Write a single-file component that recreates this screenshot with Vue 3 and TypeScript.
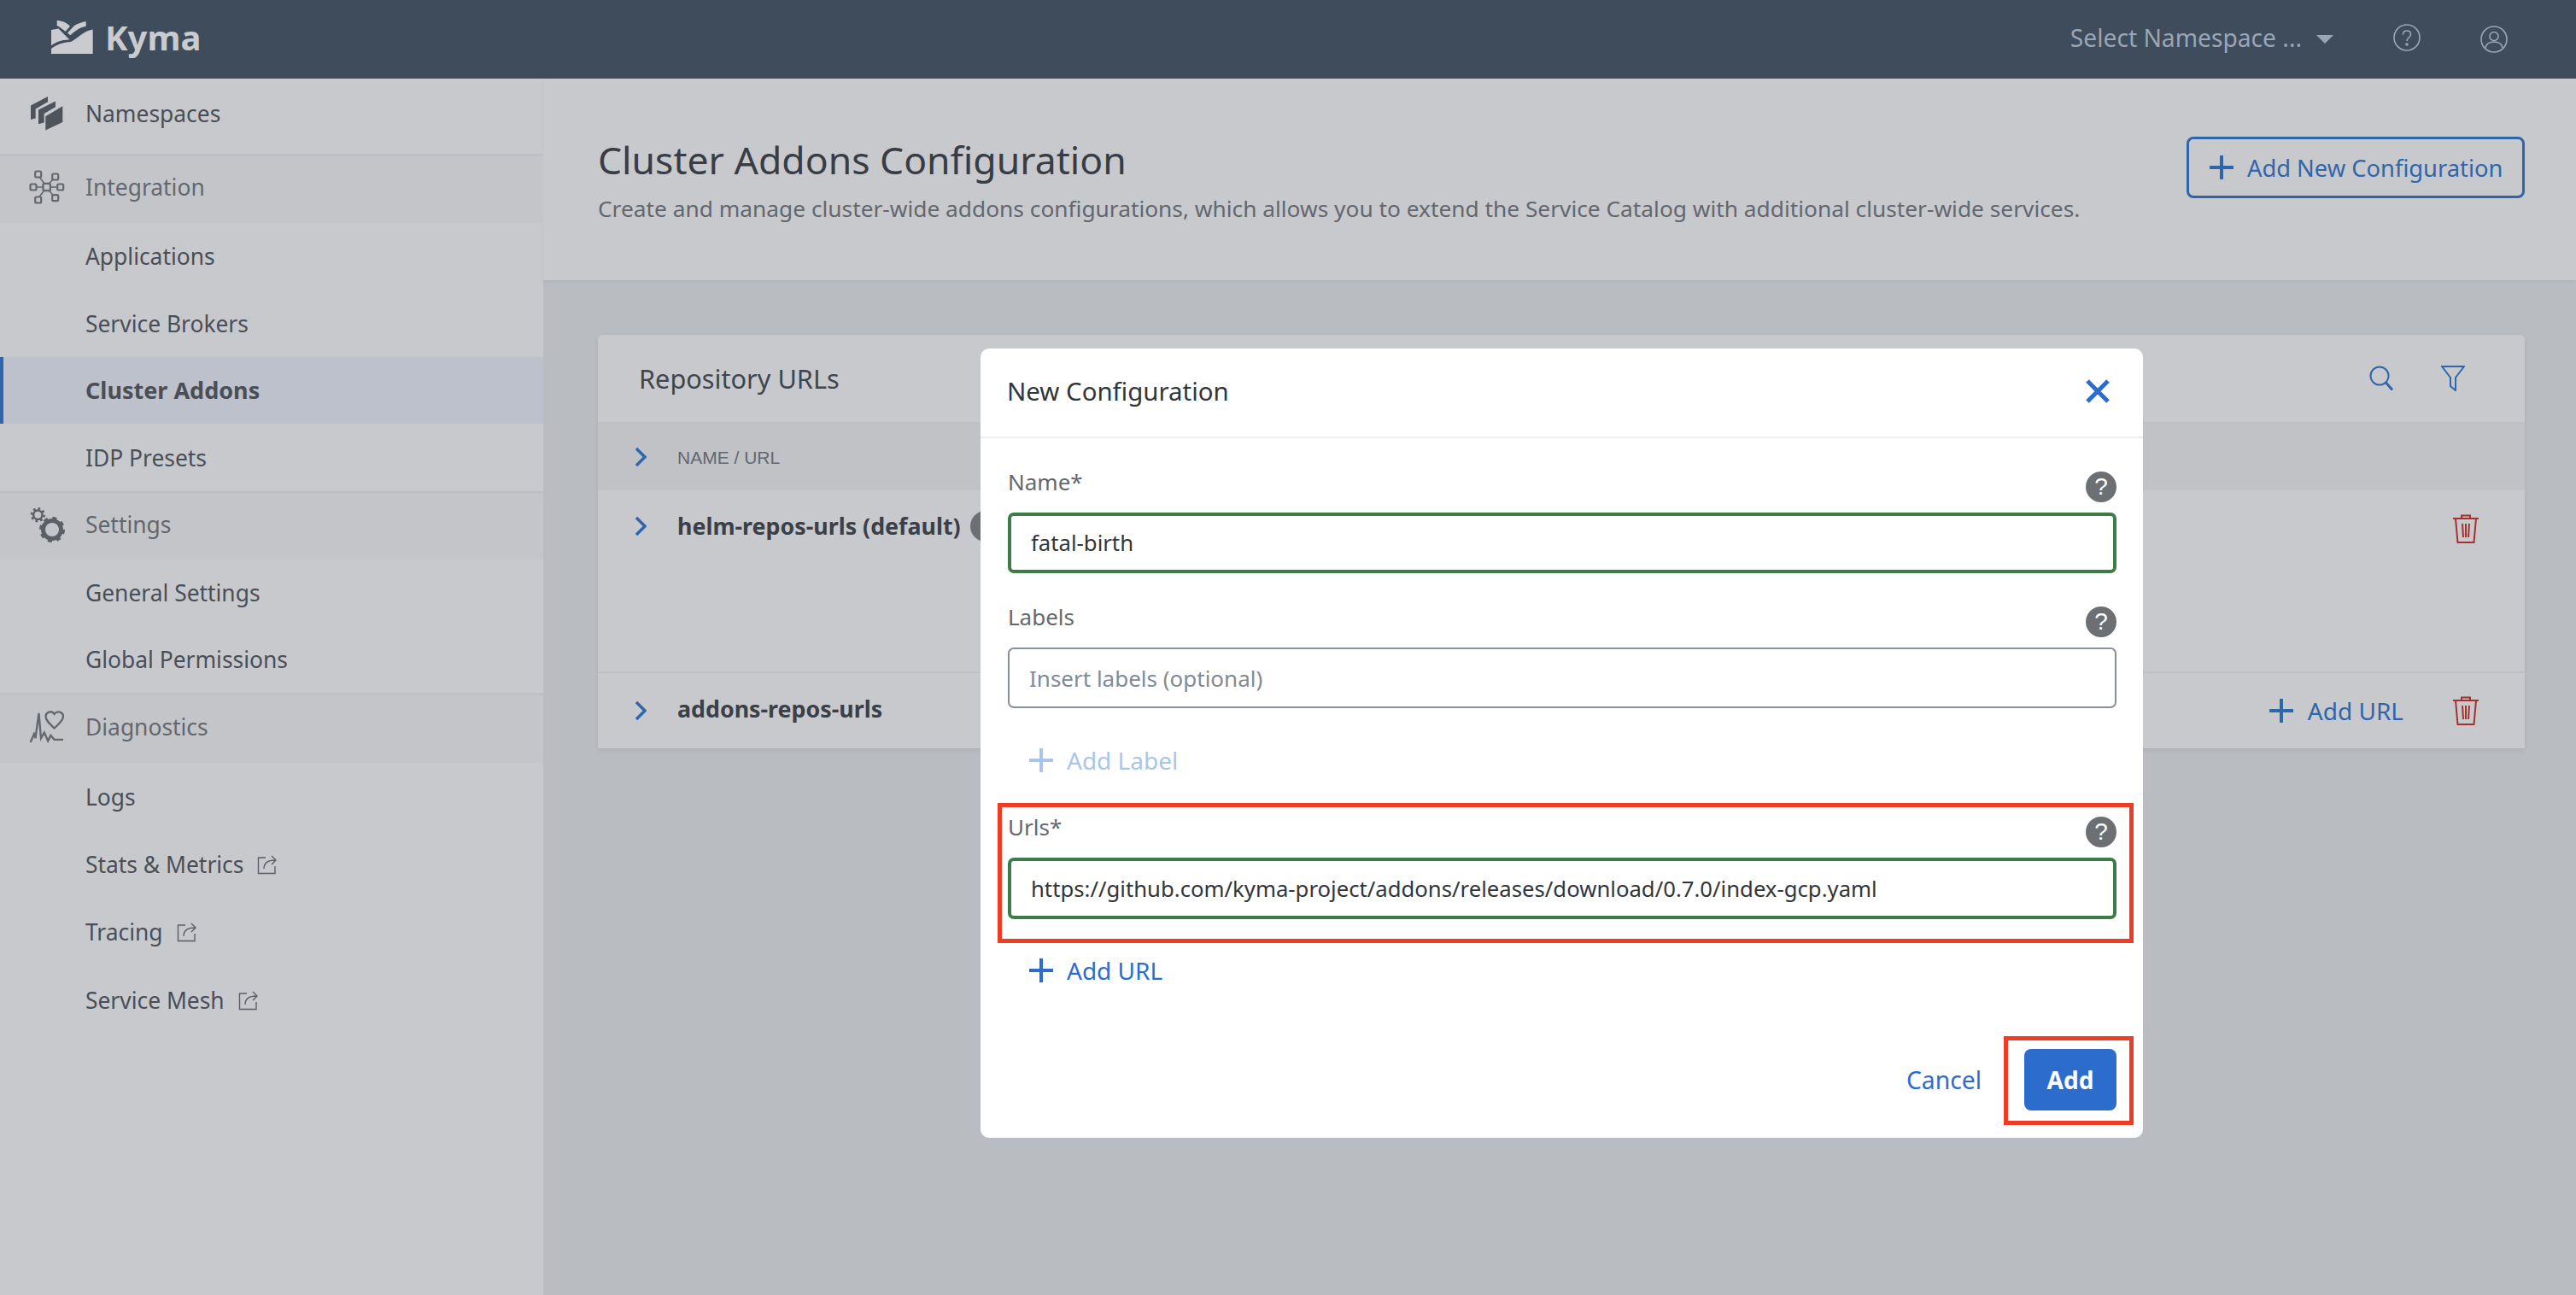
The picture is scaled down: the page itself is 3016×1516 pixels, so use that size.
<script setup lang="ts">
type NavItem = {
  label: string;
  kind: 'top' | 'group' | 'sub';
  icon?: string;
  active?: boolean;
  external?: boolean;
  height: number;
};

const nav: NavItem[] = [
  { label: 'Namespaces', kind: 'top', icon: 'namespaces', height: 88 },
  { label: 'Integration', kind: 'group', icon: 'integration', height: 81 },
  { label: 'Applications', kind: 'sub', height: 78 },
  { label: 'Service Brokers', kind: 'sub', height: 79 },
  { label: 'Cluster Addons', kind: 'sub', active: true, height: 78 },
  { label: 'IDP Presets', kind: 'sub', height: 79 },
  { label: 'Settings', kind: 'group', icon: 'settings', height: 80 },
  { label: 'General Settings', kind: 'sub', height: 78 },
  { label: 'Global Permissions', kind: 'sub', height: 78 },
  { label: 'Diagnostics', kind: 'group', icon: 'diagnostics', height: 82 },
  { label: 'Logs', kind: 'sub', height: 79 },
  { label: 'Stats & Metrics', kind: 'sub', external: true, height: 79 },
  { label: 'Tracing', kind: 'sub', external: true, height: 80 },
  { label: 'Service Mesh', kind: 'sub', external: true, height: 79 },
];

const nodes = [
  [9.7, 5],
  [29.7, 8],
  [4, 20],
  [35.7, 20],
  [9.7, 35],
  [29.7, 32.7],
];

const fields = [
  { label: 'Name*', value: 'fatal-birth', valid: true },
  { label: 'Labels', placeholder: 'Insert labels (optional)', valid: false },
];
const urlValue = 'https://github.com/kyma-project/addons/releases/download/0.7.0/index-gcp.yaml';
</script>

<template>
  <div class="app">
    <header class="topbar">
      <div class="brand">
        <svg class="logo" viewBox="0 0 49 39" fill="#c9cbce">
          <path d="M6.700 0C11 0 18 2 22 6.700L16.700 12.700C13 10 9 7 6.700 6z" />
          <path d="M40.700 1V6.700C33 8 27 13 22.300 17.300L19 14.500L27 6C31 3.500 36 2 40.700 1z" />
          <path d="M0 11L8.500 9.500C12 13 18 19 21.500 22.500C14 22 5 25 0 29.500z" />
          <path d="M0 39V33C6 28 14 25.500 23 25C31 21 38 12 48.700 10.500V39z" />
        </svg>
        <span class="brand-name">Kyma</span>
      </div>
      <div class="top-actions">
        <span class="ns-select">Select Namespace ...</span>
        <span class="caret"></span>
        <svg class="top-icon help" viewBox="0 0 32 32" fill="none" stroke="#9aa6b4" stroke-width="1.600">
          <circle cx="16" cy="16" r="15" />
          <path d="M11.500 12.500c0-3 2-4.500 4.500-4.500s4.500 1.600 4.500 4.200c0 3.800-4.500 3.800-4.500 7.800" />
          <circle cx="16" cy="24" r="1" fill="#9aa6b4" />
        </svg>
        <svg class="top-icon" viewBox="0 0 32 32" fill="none" stroke="#9aa6b4" stroke-width="1.600">
          <circle cx="16" cy="16" r="15" />
          <circle cx="16" cy="12.500" r="5" />
          <path d="M6 26c1-5 5-7 10-7s9 2 10 7" />
        </svg>
      </div>
    </header>

    <div class="body">
      <nav class="sidebar">
        <div
          v-for="item in nav"
          :key="item.label"
          class="nav-row"
          :class="[item.kind, { active: item.active }]"
          :style="{ height: item.height + 'px' }"
        >
          <span v-if="item.icon" class="nav-icon">
            <svg v-if="item.icon === 'namespaces'" viewBox="-1 0 40 40" fill="#4f535b">
              <path d="M0 10.600L20 0V6.300L5.700 14.500V25.500L0 27z" />
              <path d="M9 15.600L29 5.600V12.300L15.700 20V30.600L9 32.300z" />
              <path d="M17.300 23.300L37.300 11.300V30L17.300 39.600z" />
            </svg>
            <svg v-else-if="item.icon === 'integration'" viewBox="0 0 40 40" fill="none" stroke="#63676e" stroke-width="2.200">
              <rect v-for="(n, i) in nodes" :key="i" :x="n[0] - 3.500" :y="n[1] - 3.500" width="7" height="7" rx="1.500" />
              <rect x="15.500" y="15.800" width="8.400" height="8.400" rx="1.500" />
              <path d="M11 8l6 8M27.500 10.500l-5 5.300M7.500 20h8M24 20h8M16.500 24.200L11 31.500M22.500 24.200L27.500 30" stroke-width="1.600" />
            </svg>
            <svg v-else-if="item.icon === 'settings'" viewBox="0 0 40 40" fill="none" stroke="#5b5f66">
              <circle cx="9.300" cy="8.700" r="5.200" stroke-width="2.500" />
              <circle cx="9.300" cy="8.700" r="7.400" stroke-width="2.400" stroke-dasharray="2.800 3" />
              <circle cx="26" cy="26" r="10.500" stroke-width="5" />
              <circle cx="26" cy="26" r="13.500" stroke-width="3" stroke-dasharray="5 5.600" />
            </svg>
            <svg v-else viewBox="0 -1 41 41" fill="none" stroke="#63676e" stroke-width="2.400">
              <path d="M0.700 38L5 28L6.700 33L10.700 3L13.300 33L17.300 26.300L21.700 36.300L25 29.700L29.300 34.700H40" />
              <path d="M29.300 21C24 16 19 12 19 7C19 2 26 -1 29.300 4C33 -1 40 2 40 7C40 12 34.500 16 29.300 21z" />
            </svg>
          </span>
          <span class="nav-label">{{ item.label }}</span>
          <svg v-if="item.external" class="ext" viewBox="0 0 24 24" fill="none" stroke="#5a5e66" stroke-width="1.400">
            <path d="M10 4H1.500v18.500H21V14" />
            <path d="M8 17c0-6 4-10 13-10M17 2l5 5-5 5" />
          </svg>
        </div>
      </nav>

      <main class="page">
        <section class="page-head">
          <div>
            <h1>Cluster Addons Configuration</h1>
            <p>Create and manage cluster-wide addons configurations, which allows you to extend the Service Catalog with additional cluster-wide services.</p>
          </div>
          <button class="outline-btn">
            <svg viewBox="0 0 28 28" class="plus"><path d="M14 0v28M0 14h28" /></svg>
            Add New Configuration
          </button>
        </section>

        <section class="content">
          <div class="panel">
            <div class="panel-head">
              <h2>Repository URLs</h2>
              <div class="panel-tools">
                <svg viewBox="0 0 28 30" fill="none" stroke="#2f65ab" stroke-width="2">
                  <circle cx="12" cy="12" r="10.500" />
                  <path d="M19.500 20l7.500 8.500" stroke-width="3" />
                </svg>
                <svg viewBox="0 0 28 30" fill="none" stroke="#2f65ab" stroke-width="2">
                  <path d="M1 1h26L17 14v15l-6-5V14z" />
                </svg>
              </div>
            </div>
            <div class="row col-head">
              <svg class="chev" viewBox="0 0 14 24"><path d="M2 2l10 10L2 22" /></svg>
              <span>NAME / URL</span>
            </div>
            <div class="row first">
              <svg class="chev" viewBox="0 0 14 24"><path d="M2 2l10 10L2 22" /></svg>
              <strong>helm-repos-urls (default)</strong>
              <span class="hint-dot"></span>
              <svg class="trash" viewBox="0 0 30 34" fill="none" stroke="#a33130" stroke-width="2">
                <path d="M0 5h30M10 5V1.500h10V5M3 5l2.500 28h19L27 5M11 11l1 16M15 11v16M19 11l-1 16" />
              </svg>
            </div>
            <div class="row second">
              <svg class="chev" viewBox="0 0 14 24"><path d="M2 2l10 10L2 22" /></svg>
              <strong>addons-repos-urls</strong>
              <span class="row-add">
                <svg viewBox="0 0 28 28" class="plus"><path d="M14 0v28M0 14h28" /></svg>
                Add URL
              </span>
              <svg class="trash" viewBox="0 0 30 34" fill="none" stroke="#a33130" stroke-width="2">
                <path d="M0 5h30M10 5V1.500h10V5M3 5l2.500 28h19L27 5M11 11l1 16M15 11v16M19 11l-1 16" />
              </svg>
            </div>
          </div>
        </section>
      </main>
    </div>

    <div class="modal">
      <div class="modal-head">
        <span>New Configuration</span>
        <svg class="close" viewBox="0 0 28 28"><path d="M2 2l24 24M26 2L2 26" /></svg>
      </div>
      <div class="modal-body">
        <div v-for="f in fields" :key="f.label" class="field">
          <div class="field-label">
            <label>{{ f.label }}</label>
            <span class="help-badge">?</span>
          </div>
          <div class="input" :class="{ valid: f.valid, placeholder: !f.value }">{{ f.value || f.placeholder }}</div>
        </div>
        <div class="link-btn disabled">
          <svg viewBox="0 0 28 28" class="plus"><path d="M14 0v28M0 14h28" /></svg>
          Add Label
        </div>
        <div class="field urls">
          <div class="field-label">
            <label>Urls*</label>
            <span class="help-badge">?</span>
          </div>
          <div class="input valid">{{ urlValue }}</div>
          <div class="callout"></div>
        </div>
        <div class="link-btn">
          <svg viewBox="0 0 28 28" class="plus"><path d="M14 0v28M0 14h28" /></svg>
          Add URL
        </div>
      </div>
      <div class="modal-foot">
        <span class="cancel">Cancel</span>
        <button class="primary">
          Add
          <span class="callout"></span>
        </button>
      </div>
    </div>
  </div>
</template>

<style>
html,
body {
  margin: 0;
  background: #b9bcc1;
}
</style>

<style scoped>
.app {
  position: relative;
  width: 3016px;
  height: 1516px;
  overflow: hidden;
  display: flex;
  flex-direction: column;
  font-family: "Noto Sans", "Open Sans", sans-serif;
  color: #4a4e57;
  background: #b9bcc1;
}

.topbar {
  height: 92px;
  flex: none;
  display: flex;
  align-items: center;
  justify-content: space-between;
  background: #3f4c5c;
}

.brand {
  display: flex;
  align-items: center;
  padding-left: 60px;
  gap: 14px;
}

.logo {
  width: 49px;
  height: 39px;
  margin-top: -6px;
}

.brand-name {
  font-size: 40px;
  font-weight: 700;
  line-height: 50px;
  margin-bottom: 4px;
  color: #c9cbce;
}

.top-actions {
  display: flex;
  align-items: center;
  padding-right: 80px;
}

.ns-select {
  font-size: 28.2px;
  line-height: 40px;
  margin-bottom: 5px;
  color: #9aa6b4;
}

.caret {
  width: 0;
  height: 0;
  margin-left: 17px;
  border-left: 10px solid transparent;
  border-right: 10px solid transparent;
  border-top: 10px solid #9aa6b4;
}

.top-icon {
  width: 32px;
  height: 32px;
  margin-left: 70px;
}

.top-icon.help {
  margin-top: -4px;
}

.body {
  flex: 1;
  display: flex;
  min-height: 0;
}

.sidebar {
  width: 636px;
  flex: none;
  background: #c8c9cd;
  font-size: 26.4px;
}

.nav-row {
  display: flex;
  align-items: center;
  box-sizing: border-box;
  padding-left: 100px;
  position: relative;
}

.nav-row.top,
.nav-row.group {
  padding-bottom: 6px;
}

.nav-row.group {
  background: #c4c5c9;
  color: #63676e;
  border-top: 3px solid #bfc0c5;
}

.nav-row.active {
  background: #bcc1cb;
  font-weight: 700;
  font-size: 27px;
  padding-bottom: 2px;
  box-shadow: inset 4px 0 0 #2f66ab;
}

.nav-icon {
  position: absolute;
  left: 35px;
  top: calc(50% - 3px);
  width: 40px;
  height: 40px;
  transform: translateY(-50%);
}

.nav-icon svg {
  display: block;
  width: 100%;
  height: 100%;
  overflow: visible;
}

.ext {
  width: 24px;
  height: 24px;
  margin-left: 16px;
}

.page {
  flex: 1;
  display: flex;
  flex-direction: column;
  min-width: 0;
}

.page-head {
  height: 236px;
  box-sizing: border-box;
  flex: none;
  display: flex;
  justify-content: space-between;
  align-items: flex-start;
  padding: 60px 60px 0 64px;
  background: #c8c9cd;
  box-shadow: 0 2px 4px rgba(0, 0, 0, 0.05);
}

h1 {
  margin: 0;
  font-size: 44.5px;
  line-height: 70px;
  font-weight: 400;
  color: #383c44;
}

.page-head p {
  margin: 2px 0 0;
  font-size: 26.3px;
  line-height: 40px;
  color: #63676e;
}

.outline-btn {
  width: 396px;
  height: 72px;
  margin-top: 8px;
  display: flex;
  align-items: center;
  gap: 16px;
  padding: 0 0 0 24px;
  border: 3px solid #2f66ab;
  border-radius: 8px;
  background: none;
  color: #2f66ab;
  font: inherit;
  font-size: 27.3px;
}

.plus {
  width: 28px;
  height: 28px;
  flex: none;
  fill: none;
  stroke: currentColor;
  stroke-width: 4;
}

.content {
  flex: 1;
  padding: 64px 60px 0 64px;
}

.panel {
  background: #c8c9cd;
  border-radius: 6px 6px 0 0;
  box-shadow: 0 2px 6px rgba(0, 0, 0, 0.08);
}

.panel-head {
  height: 104px;
  display: flex;
  align-items: center;
  justify-content: space-between;
  padding: 0 70px 0 48px;
  border-bottom: 2px solid #bfc0c5;
  box-sizing: border-box;
}

h2 {
  margin: 0;
  font-size: 30.7px;
  font-weight: 400;
  color: #41454d;
}

.panel-tools {
  display: flex;
  gap: 56px;
}

.panel-tools svg {
  width: 28px;
  height: 30px;
}

.row {
  display: flex;
  align-items: center;
  padding-left: 43px;
  padding-right: 54px;
  box-sizing: border-box;
}

.chev {
  width: 14px;
  height: 24px;
  margin-right: 36px;
  flex: none;
  fill: none;
  stroke: #2f66ab;
  stroke-width: 3.5;
}

.col-head {
  height: 78px;
  background: #c0c2c6;
  font-family: "Liberation Sans", sans-serif;
  font-size: 21px;
  color: #63676e;
}

.col-head span {
  margin-top: 2px;
}

.row strong {
  font-size: 26.8px;
  font-weight: 700;
  line-height: 36px;
  color: #3b3f47;
}

.first {
  height: 214px;
  align-items: flex-start;
  padding-top: 24px;
  border-bottom: 2px solid #bfc0c5;
}

.first .chev {
  margin-top: 6px;
}

.first .trash {
  margin-top: 4px;
}

.second strong {
  margin-bottom: 4px;
}

.second {
  height: 88px;
}

.hint-dot {
  width: 36px;
  height: 36px;
  margin-left: 11px;
  border-radius: 50%;
  background: #6d7073;
}

.trash {
  width: 30px;
  height: 34px;
  margin-left: auto;
  flex: none;
}

.row-add {
  margin-left: auto;
  display: flex;
  align-items: center;
  gap: 17px;
  color: #2f65ab;
  font-size: 28px;
}

.row-add + .trash {
  margin-left: 58px;
}

.modal {
  position: absolute;
  left: 1148px;
  top: 408px;
  width: 1361px;
  height: 924px;
  display: flex;
  flex-direction: column;
  background: #fff;
  border-radius: 10px;
}

.modal-head {
  height: 105px;
  flex: none;
  box-sizing: border-box;
  display: flex;
  align-items: center;
  justify-content: space-between;
  padding: 0 39px 3px 31px;
  border-bottom: 2px solid #eeeeef;
  font-size: 29.4px;
  color: #32363a;
}

.close {
  width: 28px;
  height: 28px;
  fill: none;
  stroke: #2b6cce;
  stroke-width: 5;
}

.modal-body {
  flex: 1;
  padding: 39px 31px 0 32px;
}

.field {
  margin-bottom: 39px;
}

.field-label {
  display: flex;
  justify-content: space-between;
  align-items: flex-start;
  height: 36px;
  margin-bottom: 12px;
  font-size: 26px;
  line-height: 24px;
  color: #63676e;
}

.help-badge {
  width: 36px;
  height: 36px;
  border-radius: 50%;
  background: #6d7073;
  color: #fff;
  display: flex;
  align-items: center;
  justify-content: center;
  font-size: 28px;
  font-family: "Liberation Sans", sans-serif;
}

.input {
  height: 71px;
  box-sizing: border-box;
  display: flex;
  align-items: center;
  padding-left: 23px;
  border: 2px solid #8a909a;
  border-radius: 7px;
  font-size: 26px;
  color: #32363a;
}

.input.valid {
  border: 4px solid #3c7d47;
  padding-left: 23px;
  font-size: 25.7px;
}

.input.placeholder {
  color: #828a96;
}

.link-btn {
  display: flex;
  align-items: center;
  gap: 16px;
  margin-left: 25px;
  height: 44px;
  font-size: 28px;
  color: #2b6cce;
}

.link-btn.disabled {
  color: #a9c5ea;
}

.urls {
  position: relative;
  margin-top: 44px;
  margin-bottom: 38px;
}

.urls .input {
  height: 72px;
}

.callout {
  position: absolute;
  box-sizing: border-box;
  border: 5px solid #ee3d24;
  pointer-events: none;
}

.urls .callout {
  left: -12px;
  right: -20px;
  top: -16px;
  bottom: -28px;
}

.modal-foot {
  height: 104px;
  flex: none;
  display: flex;
  align-items: flex-start;
  justify-content: flex-end;
  gap: 50px;
  padding-right: 31px;
}

.cancel {
  font-size: 28.3px;
  line-height: 72px;
  color: #2b6cce;
}

.primary {
  position: relative;
  width: 108px;
  height: 72px;
  border: none;
  border-radius: 8px;
  background: #2b6ccd;
  color: #fff;
  font: inherit;
  font-size: 28px;
  font-weight: 700;
}

.primary .callout {
  left: -24px;
  right: -20px;
  top: -15px;
  bottom: -17px;
}
</style>
